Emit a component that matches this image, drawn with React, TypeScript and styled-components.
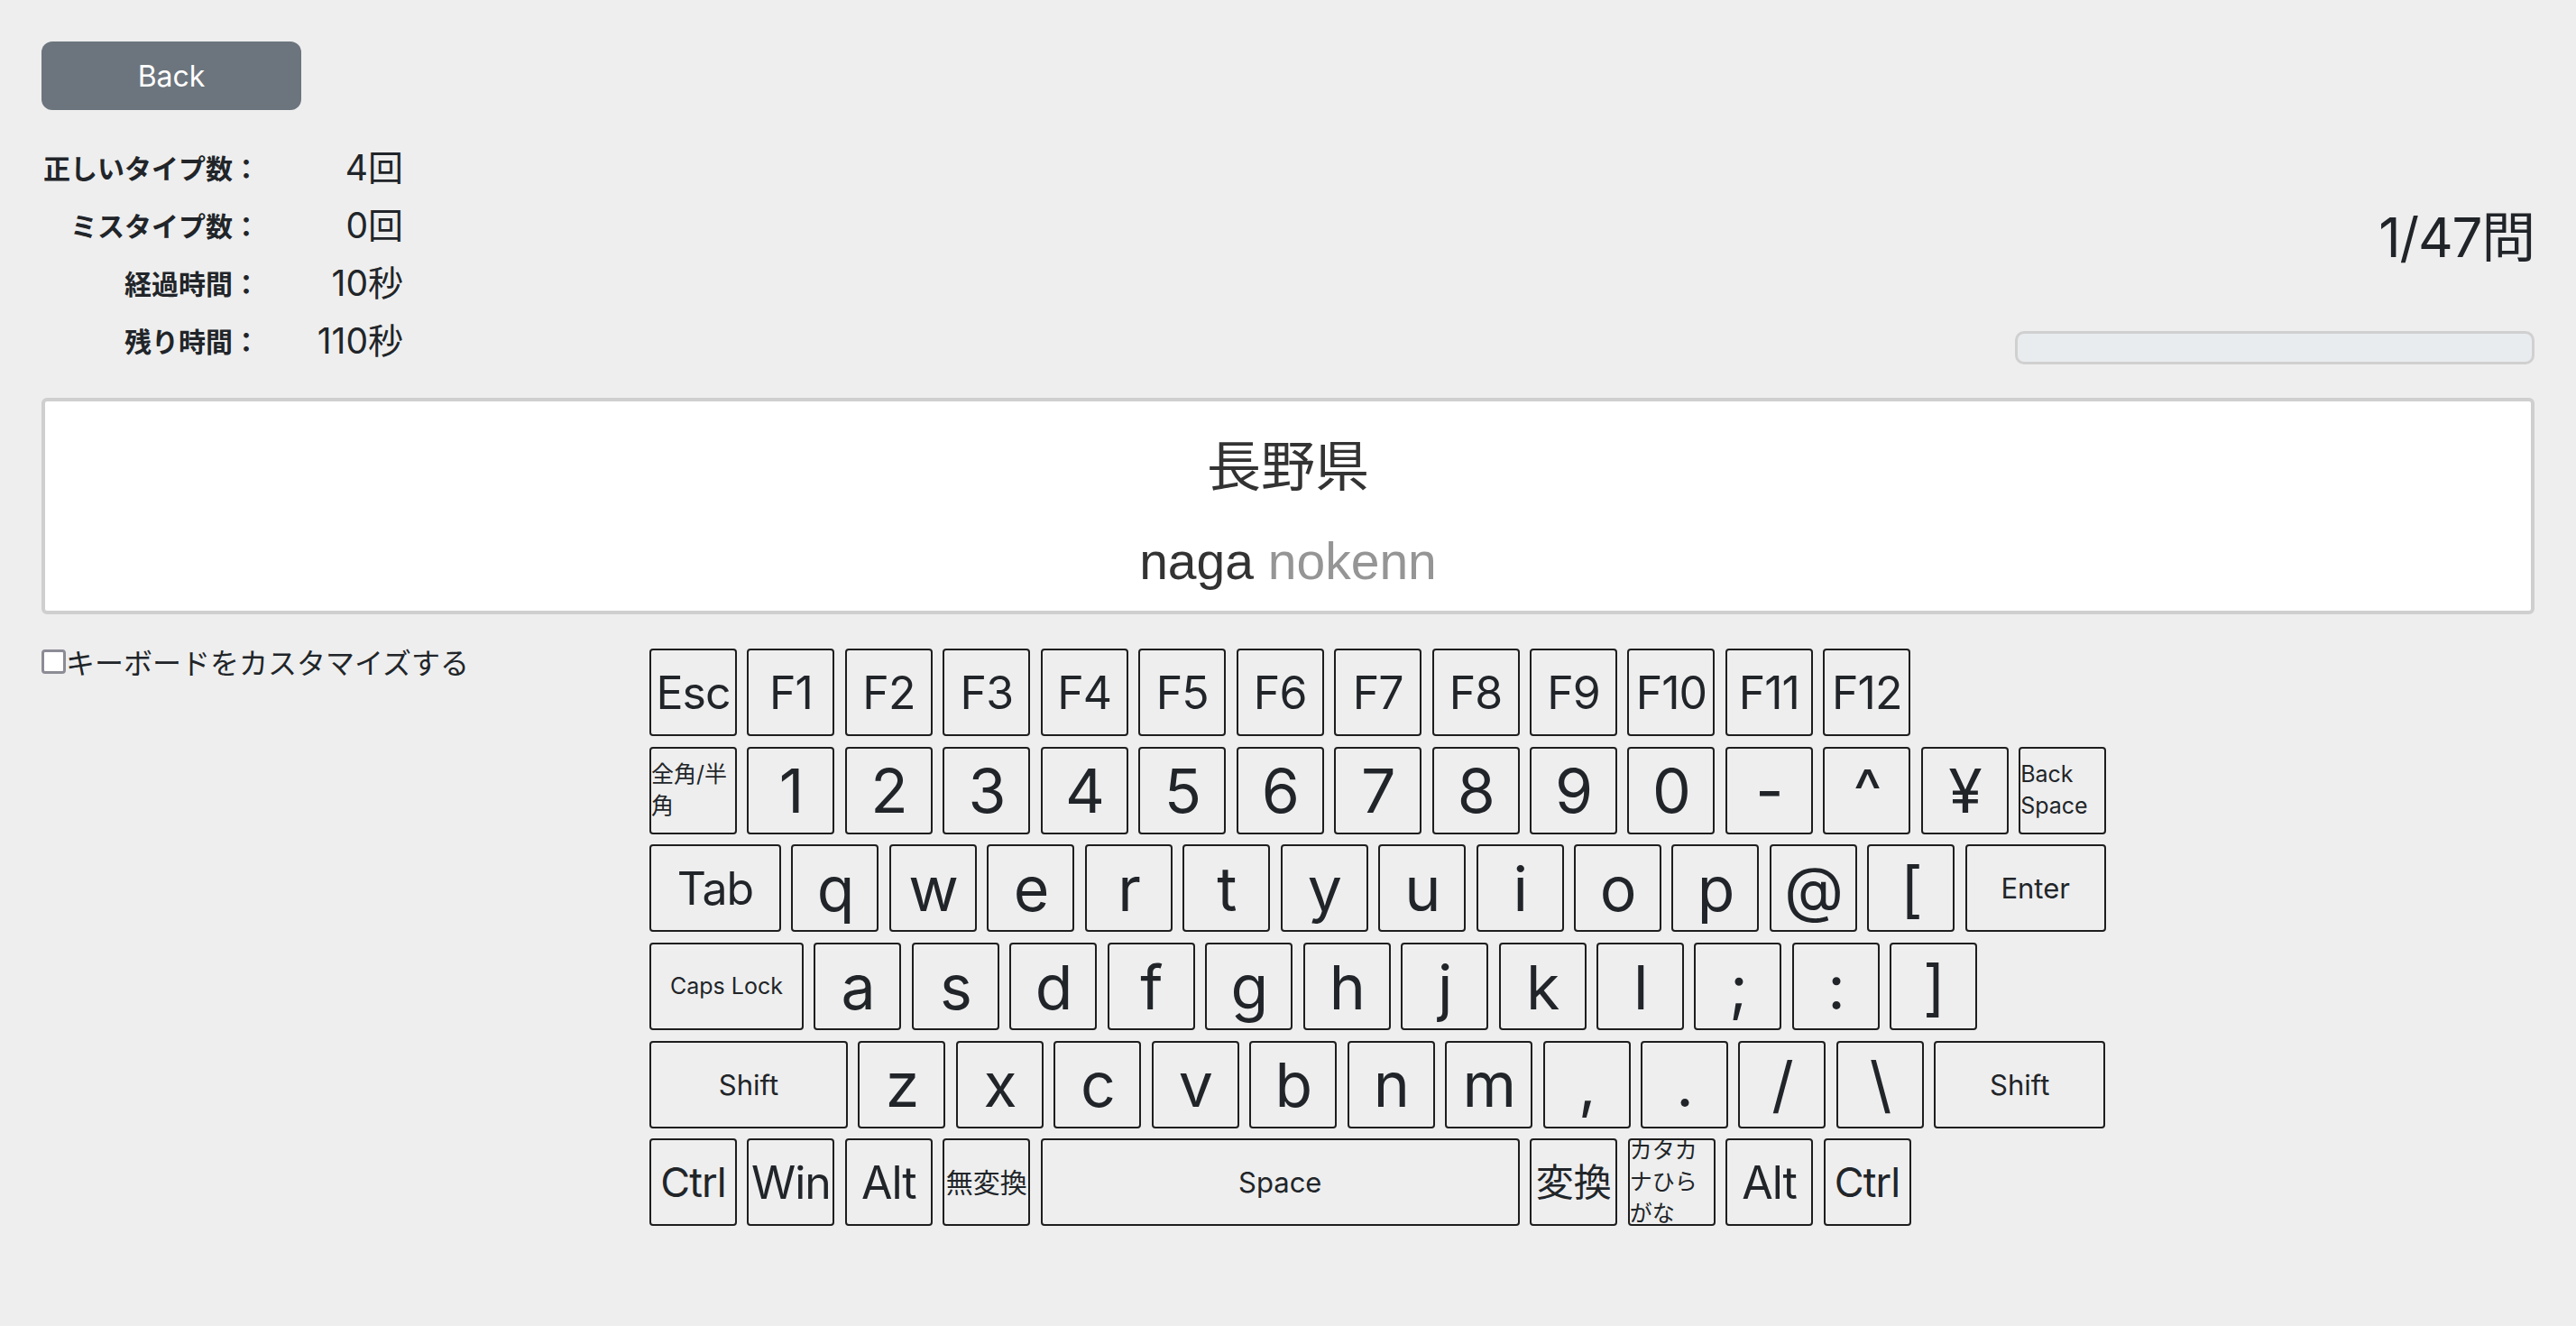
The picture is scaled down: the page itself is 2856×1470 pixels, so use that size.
import React from 'react'
import styled, { createGlobalStyle } from 'styled-components'

const GlobalStyle = createGlobalStyle`
  html, body {
    margin: 0;
    padding: 0;
    background-color: #eeeeee;
  }
  body {
    font-family: 'Inter', 'Noto Sans CJK JP', sans-serif;
    color: #212529;
  }
`

const Page = styled.div`
  padding: 46px 46px 0 46px;
`

const Header = styled.div`
  display: flex;
  justify-content: space-between;
  align-items: flex-end;
`

const LeftColumn = styled.div`
  display: flex;
  flex-direction: column;
`

const BackButton = styled.button`
  width: 288px;
  height: 76px;
  border: none;
  border-radius: 12px;
  background-color: #6c757d;
  color: #ffffff;
  font-family: 'Inter', sans-serif;
  font-size: 32px;
  cursor: pointer;
  margin-bottom: 31px;
`

const Stats = styled.div`
  display: grid;
  grid-template-columns: 242px 159px;
  grid-auto-rows: 64px;
  align-items: center;
`

const StatLabel = styled.div`
  text-align: right;
  font-family: 'Noto Sans CJK JP', sans-serif;
  font-weight: 700;
  font-size: 30px;
  line-height: 1;
`

const StatValue = styled.div`
  text-align: right;
  font-family: 'Inter', 'Noto Sans CJK JP', sans-serif;
  font-size: 39px;
  line-height: 1;
`

const RightColumn = styled.div`
  display: flex;
  flex-direction: column;
  align-items: flex-end;
  padding-bottom: 5px;
`

const Count = styled.div`
  font-family: 'Inter', 'Noto Sans CJK JP', sans-serif;
  font-size: 60px;
  line-height: 70px;
  letter-spacing: -0.02em;
  margin-bottom: 69px;
`

const Progress = styled.div`
  width: 576px;
  height: 37px;
  box-sizing: border-box;
  border: 3px solid #d0d0d0;
  border-radius: 10px;
  background-color: #e9ecef;
`

const WordBox = styled.div`
  margin-top: 32px;
  height: 240px;
  box-sizing: border-box;
  border: 4px solid #cfcfcf;
  border-radius: 6px;
  background-color: #ffffff;
  display: flex;
  flex-direction: column;
  align-items: center;
  padding-top: 34px;
  font-family: 'Liberation Sans', 'Noto Sans CJK JP', sans-serif;
  color: #333333;
`

const Word = styled.div`
  font-size: 60px;
  line-height: 80px;
  margin-bottom: 28px;
`

const Roman = styled.div`
  font-size: 57px;
  line-height: 70px;
`

const Rest = styled.span`
  color: #959595;
`

const Lower = styled.div`
  display: flex;
  margin-top: 38px;
`

const Customize = styled.label`
  width: 674px;
  flex-shrink: 0;
  display: flex;
  align-items: center;
  align-self: flex-start;
  margin-top: -2px;
  font-family: 'Noto Sans CJK JP', sans-serif;
  font-size: 32px;
  line-height: 32px;
`

const CheckBox = styled.input`
  appearance: none;
  margin: 0;
  width: 27px;
  height: 27px;
  box-sizing: border-box;
  border: 3px solid #8c8c96;
  border-radius: 4px;
  background-color: #ffffff;
`

const Keyboard = styled.div`
  display: flex;
  flex-direction: column;
  gap: 11.7px;
`

const KeyRow = styled.div`
  display: flex;
  gap: 11.45px;
`

const Key = styled.div<{ $w: number; $size: number; $wrap: boolean }>`
  width: ${(p) => p.$w}px;
  height: 97px;
  flex-shrink: 0;
  box-sizing: border-box;
  border: 2px solid #1e1e1e;
  border-radius: 4px;
  background-color: #eeeeee;
  display: flex;
  align-items: center;
  justify-content: ${(p) => (p.$wrap ? 'flex-start' : 'center')};
  text-align: ${(p) => (p.$wrap ? 'left' : 'center')};
  font-family: 'Inter', 'Noto Sans CJK JP', sans-serif;
  font-size: ${(p) => p.$size}px;
  line-height: ${(p) => (p.$wrap ? '35px' : '1')};
  letter-spacing: ${(p) => (p.$size >= 45 ? '-0.02em' : '0')};
  white-space: ${(p) => (p.$wrap ? 'normal' : 'nowrap')};
  overflow-wrap: anywhere;
`

type KeyDef = { label: string; w?: number; size?: number; wrap?: boolean }

const k = (label: string, size?: number, w?: number, wrap?: boolean): KeyDef => ({ label, size, w, wrap })
const chars = (s: string): KeyDef[] => s.split('').map((c) => k(c))

const rows: KeyDef[][] = [
  [k('Esc'), ...Array.from({ length: 12 }, (_, i) => k(`F${i + 1}`))],
  [k('全角/半角', 25, 97, true), ...chars('1234567890-^¥'), k('Back Space', 25, 97, true)],
  [k('Tab', 50, 146), ...chars('qwertyuiop@['), k('Enter', 31, 156)],
  [k('Caps Lock', 25, 171), ...chars('asdfghjkl;:]')],
  [k('Shift', 31, 220), ...chars('zxcvbnm,./\\'), k('Shift', 31, 190)],
  [
    k('Ctrl', 45),
    k('Win'),
    k('Alt'),
    k('無変換', 30),
    k('Space', 31, 531),
    k('変換', 42),
    k('カタカナひらがな', 25, 97, true),
    k('Alt'),
    k('Ctrl', 45),
  ],
]

const stats = [
  { label: '正しいタイプ数：', value: '4回' },
  { label: 'ミスタイプ数：', value: '0回' },
  { label: '経過時間：', value: '10秒' },
  { label: '残り時間：', value: '110秒' },
]

const App = () => {
  return (
    <Page>
      <GlobalStyle />
      <Header>
        <LeftColumn>
          <BackButton>Back</BackButton>
          <Stats>
            {stats.map((s) => (
              <React.Fragment key={s.label}>
                <StatLabel>{s.label}</StatLabel>
                <StatValue>{s.value}</StatValue>
              </React.Fragment>
            ))}
          </Stats>
        </LeftColumn>
        <RightColumn>
          <Count>1/47問</Count>
          <Progress />
        </RightColumn>
      </Header>

      <WordBox>
        <Word>長野県</Word>
        <Roman>
          naga <Rest>nokenn</Rest>
        </Roman>
      </WordBox>

      <Lower>
        <Customize>
          <CheckBox type="checkbox" />
          キーボードをカスタマイズする
        </Customize>
        <Keyboard>
          {rows.map((row, ri) => (
            <KeyRow key={ri}>
              {row.map((key, ki) => {
                const size = key.size ?? (key.label.length === 1 ? 68 : 50)
                return (
                  <Key key={ki} $w={key.w ?? 97} $size={size} $wrap={!!key.wrap}>
                    {key.label}
                  </Key>
                )
              })}
            </KeyRow>
          ))}
        </Keyboard>
      </Lower>
    </Page>
  )
}

export default App
